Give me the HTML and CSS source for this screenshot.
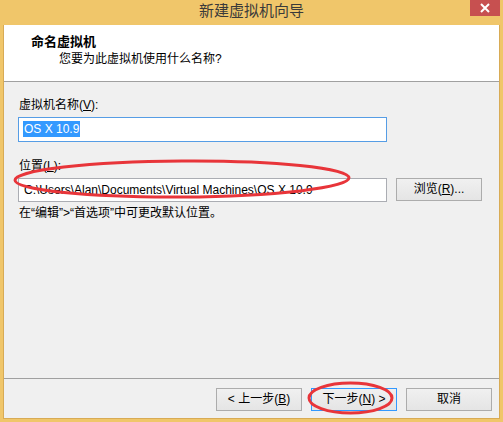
FILE: index.html
```html
<!DOCTYPE html>
<html lang="zh-CN">
<head>
<meta charset="utf-8">
<title>新建虚拟机向导</title>
<link rel="stylesheet" href="styles.css">
</head>
<body>
<div class="window">
  <div class="titlebar">
    <span class="title">新建虚拟机向导</span>
    <span class="close">
      <svg width="12" height="10" viewBox="0 0 12 10"><path d="M2 1 L10 9 M10 1 L2 9" stroke="#fff" stroke-width="2"/></svg>
    </span>
  </div>
  <div class="client">
    <div class="header">
      <div class="h-title">命名虚拟机</div>
      <div class="h-sub">您要为此虚拟机使用什么名称?</div>
    </div>
    <div class="content">
      <div class="label">虚拟机名称(<u>V</u>):</div>
      <div class="input focused"><span class="sel">OS X 10.9</span></div>
      <div class="label loc-label">位置(<u>L</u>):</div>
      <div class="row">
        <div class="input loc">C:\Users\Alan\Documents\Virtual Machines\OS X 10.9</div>
        <button class="btn browse">浏览(<u>R</u>)...</button>
      </div>
      <div class="hint">在“编辑”&gt;“首选项”中可更改默认位置。</div>
    </div>
    <div class="footer">
      <button class="btn">&lt; 上一步(<u>B</u>)</button>
      <button class="btn default">下一步(<u>N</u>) &gt;</button>
      <button class="btn">取消</button>
    </div>
  </div>
  <svg class="marks" width="503" height="422" viewBox="0 0 503 422">
    <ellipse cx="182" cy="179" rx="167" ry="18" fill="none" stroke="#e8353a" stroke-width="3" transform="rotate(-0.4 182 179)"/>
    <ellipse cx="350.5" cy="398" rx="41.5" ry="15" fill="none" stroke="#e8353a" stroke-width="3"/>
  </svg>
</div>
</body>
</html>
```

FILE: styles.css
```css
* { box-sizing: border-box; }

html, body {
  margin: 0;
  padding: 0;
}

body {
  font-family: "Liberation Sans", "Noto Sans CJK SC", sans-serif;
  font-size: 12px;
  color: #000;
}

.window {
  position: relative;
  width: 503px;
  height: 422px;
  background: #f0c66a;
  padding: 0 3px 3px 3px;
  display: flex;
  flex-direction: column;
}

.titlebar {
  height: 25px;
  flex: none;
  display: flex;
  align-items: flex-start;
  justify-content: center;
  position: relative;
}

.title {
  font-family: "Noto Sans CJK SC", sans-serif;
  font-size: 15px;
  line-height: 20px;
  color: #3a3a3a;
}

.close {
  position: absolute;
  right: 0;
  top: 0;
  width: 30px;
  height: 16px;
  background: #c75050;
  display: flex;
  align-items: center;
  justify-content: center;
}

.client {
  flex: 1;
  display: flex;
  flex-direction: column;
  background: #f0f0f0;
  border: 1px solid #d8ab55;
  border-top: none;
}

.header {
  height: 57px;
  flex: none;
  background: #fff;
  border-bottom: 1px solid #a0a0a0;
  padding: 9px 0 0 27px;
}

.h-title {
  font-weight: bold;
  font-size: 13px;
  line-height: 16px;
}

.h-sub {
  margin: 1px 0 0 28px;
  line-height: 16px;
}

.content {
  flex: 1;
  padding: 15px 0 0 14px;
}

.label {
  line-height: 16px;
  padding-left: 1px;
  margin-bottom: 4px;
}

.loc-label {
  margin-top: 16px;
}

u { text-decoration: underline; text-underline-offset: 1px; }

.input {
  width: 369px;
  height: 25px;
  background: #fff;
  border: 1px solid #abadb3;
  padding: 0 4px;
  line-height: 23px;
  white-space: nowrap;
  overflow: hidden;
}

.input.focused {
  border-color: #569de5;
}

.sel {
  background: #3399ff;
  color: #fff;
  padding: 1px 1px;
}

.row {
  display: flex;
  align-items: flex-start;
  gap: 9px;
}

.input.loc {
  height: 24px;
  line-height: 22px;
  padding-left: 5px;
}

.btn {
  font: inherit;
  height: 23px;
  width: 86px;
  padding: 0;
  border: 1px solid #acacac;
  background: linear-gradient(#f0f0f0, #e5e5e5);
  color: #000;
  line-height: 21px;
}

.btn.default {
  border: 1px solid #3399ff;
}

.hint {
  margin-top: 3px;
  line-height: 16px;
  padding-left: 1px;
}

.footer {
  height: 40px;
  flex: none;
  border-top: 1px solid #a0a0a0;
  display: flex;
  justify-content: flex-end;
  gap: 9px;
  padding: 9px 7px 0 0;
}

.marks {
  position: absolute;
  left: 0;
  top: 0;
  pointer-events: none;
}
```
